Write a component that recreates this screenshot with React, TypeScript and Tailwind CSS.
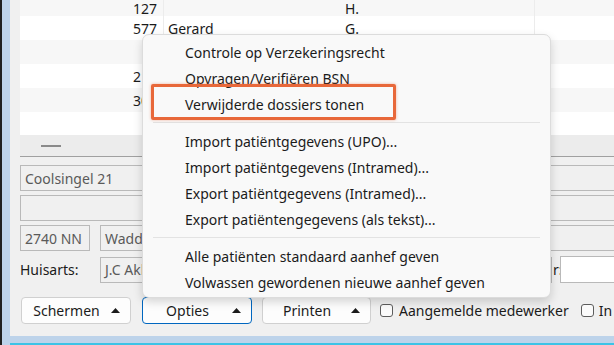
import { Fragment } from "react";

const font = { fontFamily: '"Noto Sans", "Open Sans", sans-serif' };

const rows = [
  { nr: "127", name: "", init: "H.", shade: true, h: "h-[16px]" },
  { nr: "577", name: "Gerard", init: "G.", shade: false, h: "h-[24px]" },
  { nr: "", name: "", init: "", shade: true, h: "h-[24px]" },
  { nr: "215", name: "", init: "", shade: false, h: "h-[24px]" },
  { nr: "306", name: "", init: "", shade: true, h: "h-[24px]" },
  { nr: "", name: "", init: "", shade: false, h: "h-[23px]" },
];

const menuGroups = [
  ["Controle op Verzekeringsrecht", "Opvragen/Verifiëren BSN", "Verwijderde dossiers tonen"],
  [
    "Import patiëntgegevens (UPO)...",
    "Import patiëntgegevens (Intramed)...",
    "Export patiëntgegevens (Intramed)...",
    "Export patiëntengegevens (als tekst)...",
  ],
  ["Alle patiënten standaard aanhef geven", "Volwassen gewordenen nieuwe aanhef geven"],
];

function Caret() {
  return (
    <svg width="9" height="5" viewBox="0 0 9 5" className="ml-[4px] shrink-0">
      <path d="M4.5 0 L9 5 L0 5 Z" fill="#1b1b1b" />
    </svg>
  );
}

function DropButton({ label, focused, width }: { label: string; focused?: boolean; width: string }) {
  return (
    <div
      className={`flex h-[27px] items-center rounded-[4px] border pl-[4px] pr-[10px] ${width} ${
        focused ? "border-[#0067c0] bg-[#fdfdfd]" : "border-[#d0d0d0] bg-[#fdfdfd]"
      }`}
    >
      <span className="flex-1 text-center">{label}</span>
      <Caret />
    </div>
  );
}

function Field({ text, className }: { text?: string; className: string }) {
  return (
    <div className={`flex h-[26px] items-center border border-[#b9b9b9] bg-[#f0f0f0] px-[4px] text-[#5a5a5a] ${className}`}>
      {text}
    </div>
  );
}

function CheckBox() {
  return <div className="h-[13px] w-[13px] shrink-0 rounded-[3px] border border-[#5d5d5d] bg-[#fbfbfb]" />;
}

export default function App() {
  return (
    <div
      className="relative flex h-[345px] w-[614px] overflow-hidden bg-[#f0f0f0] text-[14px] text-[#1b1b1b]"
      style={font}
    >
      {/* window frame left */}
      <div className="w-[2px] shrink-0 bg-[#202020]" />
      <div className="w-[8px] shrink-0 bg-[#bdd3ea]" />

      <div className="flex min-w-0 flex-1 flex-col">
        <div className="flex h-[336px] flex-col overflow-hidden pl-[10px]">
          {/* grid */}
          <div className="flex flex-col bg-white">
            {rows.map((r, i) => (
              <div
                key={i}
                className={`flex ${r.h} items-center overflow-hidden ${r.shade ? "bg-[#f7f7f7]" : "bg-white"}`}
              >
                <div className="w-[143px] shrink-0 whitespace-nowrap pr-[6px] text-right">{r.nr}</div>
                <div className="h-full w-px shrink-0 bg-[#ececec]" />
                <div className="w-[181px] shrink-0 pl-[4px]">{r.name}</div>
                <div className="flex-1">{r.init}</div>
                <div className="h-full w-px shrink-0 bg-[#ececec]" />
                <div className="w-[79px] shrink-0" />
              </div>
            ))}
          </div>
          <div className="flex h-[22px] items-center border-b border-[#a0a0a0] bg-[#ececec]">
            <div className="ml-[21px] h-[2px] w-[20px] bg-[#8a8a8a]" />
          </div>

          {/* form */}
          <div className="mt-[8px] flex flex-col gap-[4px]">
            <Field text="Coolsingel 21" className="-mr-[4px]" />
            <Field className="-mr-[4px]" />
            <div className="flex gap-[10px]">
              <Field text="2740 NN" className="w-[70px] shrink-0" />
              <Field text="Waddinxveen" className="-mr-[4px] flex-1" />
            </div>
            <div className="mt-[1px] flex items-center">
              <span className="w-[80px] shrink-0">Huisarts:</span>
              <Field text="J.C Akkerman" className="w-[452px] shrink-0" />
              <span className="ml-[1px] w-[7px] shrink-0">r:</span>
              <div className="-mr-[8px] h-[27px] flex-1 border border-[#b9b9b9] bg-white" />
            </div>
          </div>

          <div className="mt-[14px] flex items-center">
            <div className="ml-[1px]">
              <DropButton label="Schermen" width="w-[110px]" />
            </div>
            <div className="ml-[11px]">
              <DropButton label="Opties" focused width="w-[110px]" />
            </div>
            <div className="ml-[10px]">
              <DropButton label="Printen" width="w-[109px]" />
            </div>
            <div className="ml-[9px] flex items-center gap-[6px] whitespace-nowrap">
              <CheckBox />
              <span>Aangemelde medewerker</span>
            </div>
            <div className="ml-[12px] flex items-center gap-[5px] whitespace-nowrap">
              <CheckBox />
              <span>In</span>
            </div>
          </div>
        </div>
        <div className="h-[7px] bg-[#bdd3ea]" />
        <div className="h-[2px] bg-[#3cc3e6]" />
      </div>

      {/* context menu */}
      <div className="absolute left-[142px] top-[34px] w-[409px] rounded-[7px] border border-[#dcdcdc] bg-[#f9f9f9] pb-[2px] pt-[4px] shadow-[0_4px_10px_rgba(0,0,0,0.16)]">
        {menuGroups.map((group, gi) => (
          <Fragment key={gi}>
            {gi > 0 && (
              <div className="flex h-[11px] items-center px-[10px]">
                <div className="h-px flex-1 bg-[#e3e3e3]" />
              </div>
            )}
            {group.map((item) => (
              <div key={item} className="relative flex h-[26px] items-center pl-[42px]">
                {item === "Verwijderde dossiers tonen" && (
                  <div className="absolute left-[8px] top-[-7px] h-[36px] w-[245px] rounded-[2px] border-[3px] border-[#e8683a] shadow-[0_0_3px_rgba(232,104,58,0.5)]" />
                )}
                {item}
              </div>
            ))}
          </Fragment>
        ))}
      </div>
    </div>
  );
}
